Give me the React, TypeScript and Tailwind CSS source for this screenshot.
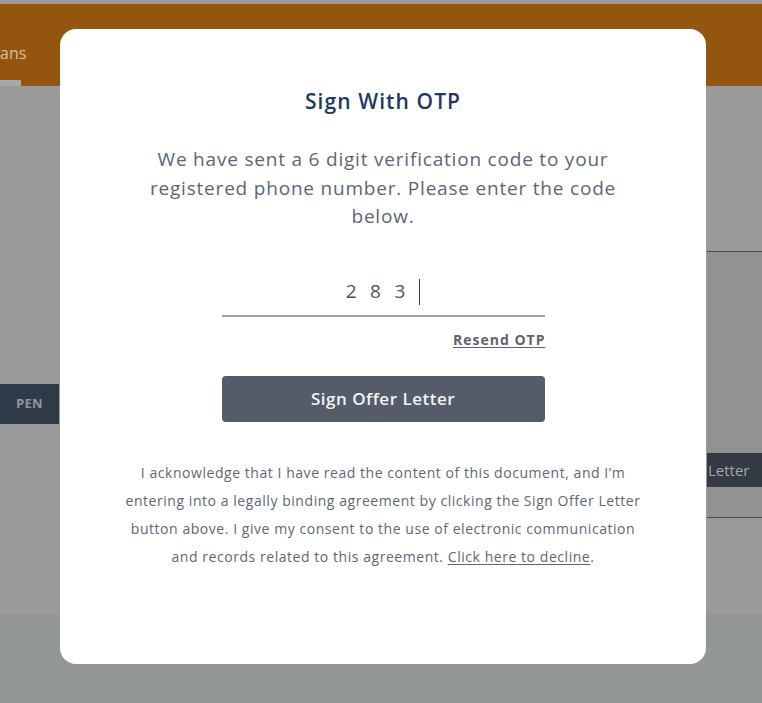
import React from "react";

export default function App() {
  return (
    <div className="relative w-[762px] h-[703px] overflow-hidden bg-[#9b9b9b]" style={{ fontFamily: "'Open Sans', Lato, sans-serif" }}>
      {/* background page */}
      <div className="flex flex-col h-full">
        <div className="h-[4px] bg-[#9a9a9a]" />
        <div className="h-[82px] bg-[#94560e] flex items-end">
          <div className="w-[30px] h-[82px] flex flex-col">
            <div className="flex-1 flex items-center text-[16px] text-[#d8c0a0] pt-[22px]">ans</div>
            <div className="h-[6px] bg-[#a8a8a8] w-[21px]" />
          </div>
        </div>
        <div className="flex-1 flex">
          <div className="flex-1 flex flex-col">
            <div className="h-[298px]" />
            <div className="w-[59px] h-[40px] bg-[#2f3a48] flex items-center justify-center text-[13px] font-bold text-[#8f969e] tracking-wide">PEN</div>
            <div className="flex-1" />
          </div>
          <div className="w-[55px] flex flex-col">
            <div className="h-[165px]" />
            <div className="h-[1px] bg-[#4a4a4a]" />
            <div className="h-[201px] bg-[#929292]" />
            <div className="h-[34px] bg-[#343a44] flex items-center pl-[1px] text-[15px] text-[#a3a7ad]">Letter</div>
            <div className="h-[30px] bg-[#929292]" />
            <div className="h-[1px] bg-[#4a4a4a]" />
            <div className="flex-1" />
          </div>
        </div>
        <div className="h-[89px] bg-[#939793]" />
      </div>

      {/* modal */}
      <div className="absolute left-[60px] top-[29px] w-[646px] h-[635px] bg-white rounded-[16px] flex flex-col items-center">
        <h2 className="mt-[58px] text-[21px] font-semibold tracking-[1.1px] text-[#1d3a62] leading-[28px]">Sign With OTP</h2>
        <p className="mt-[30px] w-[480px] text-center text-[19px] tracking-[0.8px] leading-[28.5px] text-[#5b6676]">
          We have sent a 6 digit verification code to your registered phone number. Please enter the code below.
        </p>
        <div className="mt-[46px] w-[323px] flex flex-col">
          <div className="h-[30px] flex items-center justify-center border-b-2 border-[#9aa2ac] pb-[8px] box-content">
            <span className="text-[19px] text-[#4c5564] tracking-[13.5px]">283</span>
            <span className="w-[1.5px] h-[26px] bg-[#3a3f48]" />
          </div>
          <div className="mt-[12px] flex justify-end">
            <a className="text-[14px] font-bold tracking-[1px] text-[#5c6270] underline underline-offset-2 -mr-[1px]">Resend OTP</a>
          </div>
          <button className="mt-[26px] h-[46px] rounded-[4px] bg-[#555b69] text-[#f1f2f4] text-[17px] tracking-[0.5px] font-semibold">Sign Offer Letter</button>
        </div>
        <p className="mt-[37px] w-[526px] text-center text-[14px] tracking-[0.55px] leading-[28.3px] text-[#5f6775]">
          I acknowledge that I have read the content of this document, and I’m entering into a legally binding agreement by clicking the Sign Offer Letter button above. I give my consent to the use of electronic communication and records related to this agreement.{" "}
          <a className="underline underline-offset-2">Click here to decline</a>.
        </p>
      </div>
    </div>
  );
}
